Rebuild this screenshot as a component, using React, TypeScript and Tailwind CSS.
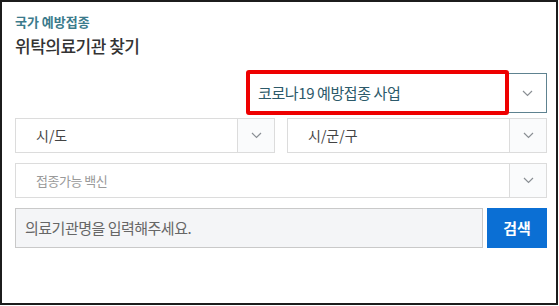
import React from 'react';

const font = { fontFamily: '"Noto Sans CJK KR", "Noto Sans", sans-serif' };

const Chevron: React.FC = () => (
  <svg width="11" height="7" viewBox="0 0 11 7" fill="none">
    <polyline points="1,1 5.5,5.5 10,1" stroke="#8a8f94" strokeWidth="1.2" />
  </svg>
);

interface SelectProps {
  label: string;
  className?: string;
  textClass?: string;
}

const SelectBox: React.FC<SelectProps> = ({ label, className = '', textClass = '' }) => (
  <div className={`flex h-[35px] border border-[#dcdcdc] bg-white ${className}`}>
    <div className={`flex flex-1 items-center pl-[20px] ${textClass}`}>{label}</div>
    <div className="flex w-[37px] items-center justify-center border-l border-[#dcdcdc] bg-[#fafbfc]">
      <Chevron />
    </div>
  </div>
);

export default function App() {
  return (
    <div className="h-[306px] w-[559px] bg-white" style={font}>
      <div className="flex h-[305px] w-[558px] flex-col border-2 border-[#1c1c1c] pl-[13px] pr-[9px] pt-[11px]">
        <div className="text-[13px] font-bold leading-[18px] text-[#3b7b8c]">국가 예방접종</div>
        <div className="mt-[4px] text-[17px] font-medium leading-[22px] tracking-[-0.5px] text-[#333]">위탁의료기관 찾기</div>

        <div className="relative ml-auto mt-[16px] flex h-[40px] w-[300px] border border-[#5e8290] bg-white">
          <div className="flex flex-1 items-center pl-[10px] text-[15px] tracking-[-0.4px] text-[#2c5a6a]">
            코로나19 예방접종 사업
          </div>
          <div className="flex w-[38px] items-center justify-center border-l border-[#5e8290]">
            <Chevron />
          </div>
          <div className="absolute left-[-2px] top-[-4px] h-[45px] w-[263px] rounded-[3px] border-4 border-[#ee0000]" />
        </div>

        <div className="mt-[5px] flex gap-[12px]">
          <SelectBox label="시/도" className="w-[260px]" textClass="text-[14px] text-[#444]" />
          <SelectBox label="시/군/구" className="w-[260px]" textClass="text-[14px] text-[#444]" />
        </div>

        <SelectBox
          label="접종가능 백신"
          className="mt-[10px] w-[532px]"
          textClass="text-[13px] tracking-[-0.5px] text-[#9a9a9a]"
        />

        <div className="mt-[10px] flex gap-[4px]">
          <div className="flex h-[40px] w-[468px] items-center border border-[#c9c9c9] bg-[#f4f5f7] pl-[9px] text-[15px] tracking-[-0.5px] text-[#666]">
            의료기관명을 입력해주세요.
          </div>
          <button className="h-[40px] w-[60px] bg-[#0b6fd4] text-[15px] font-bold text-white">검색</button>
        </div>
      </div>
    </div>
  );
}
